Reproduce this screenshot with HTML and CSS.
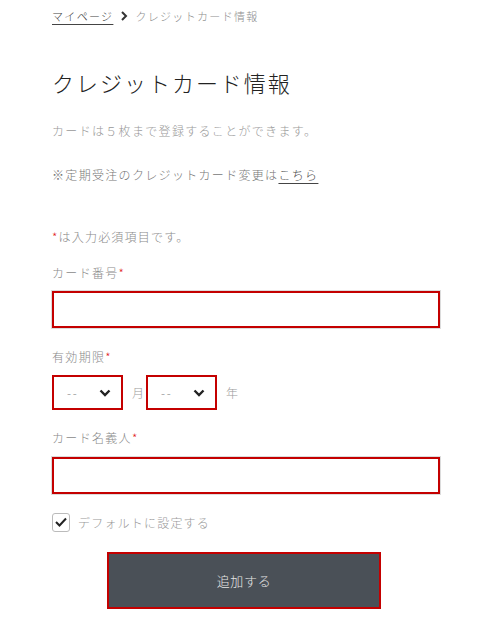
FILE: index.html
```html
<!DOCTYPE html>
<html lang="ja">
<head>
  <meta charset="UTF-8" />
  <meta name="viewport" content="width=device-width, initial-scale=1.0"/>
  <title>クレジットカード情報</title>
  <link rel="stylesheet" href="styles.css">
</head>
<body>
  <div class="page">
    <nav class="breadcrumb">
      <a href="#" class="crumb-link">マイページ</a>
      <svg class="crumb-sep" width="8" height="10" viewBox="0 0 8 10"><path d="M2 1l4 4-4 4" fill="none" stroke="#333" stroke-width="2"/></svg>
      <span class="crumb-current">クレジットカード情報</span>
    </nav>

    <h1 class="title">クレジットカード情報</h1>

    <p class="note">カードは５枚まで登録することができます。</p>
    <p class="note dark">※定期受注のクレジットカード変更は<a href="#" class="here">こちら</a></p>

    <form class="card-form">
      <p class="required-note"><span class="req">*</span>は入力必須項目です。</p>

      <label class="label" for="cardNo">カード番号<span class="req">*</span></label>
      <input type="text" id="cardNo" class="field">

      <label class="label label-exp">有効期限<span class="req">*</span></label>
      <div class="expiry">
        <div class="select-wrap">
          <select class="select">
            <option>--</option>
          </select>
          <svg class="chev" width="12" height="8" viewBox="0 0 12 8"><path d="M1.5 1.5l4.5 4.5 4.5-4.5" fill="none" stroke="#222" stroke-width="2.4"/></svg>
        </div>
        <span class="unit">月</span>
        <div class="select-wrap">
          <select class="select">
            <option>--</option>
          </select>
          <svg class="chev" width="12" height="8" viewBox="0 0 12 8"><path d="M1.5 1.5l4.5 4.5 4.5-4.5" fill="none" stroke="#222" stroke-width="2.4"/></svg>
        </div>
        <span class="unit">年</span>
      </div>

      <label class="label label-name" for="cardName">カード名義人<span class="req">*</span></label>
      <input type="text" id="cardName" class="field field-name">

      <label class="check-row">
        <span class="checkbox">
          <svg width="12" height="10" viewBox="0 0 12 10"><path d="M1 5l3.5 3.5L11 1.5" fill="none" stroke="#222" stroke-width="2"/></svg>
        </span>
        デフォルトに設定する
      </label>

      <button type="submit" class="submit">追加する</button>
    </form>
  </div>
</body>
</html>
```

FILE: styles.css
```css
body {
  margin: 0;
  background: #ffffff;
  color: #222;
  font-family: "Noto Sans CJK JP", "Noto Sans", sans-serif;
  font-weight: 300;
}
.page {
  width: 388px;
  padding: 6px 0 0 52px;
}
.breadcrumb {
  display: flex;
  align-items: center;
  height: 20px;
  font-size: 11px;
  letter-spacing: 0.12em;
}
.crumb-link {
  color: #444;
  text-decoration: underline;
  text-underline-offset: 3px;
}
.crumb-sep {
  margin: 0 7px 0 7px;
}
.crumb-current {
  color: #8e8e8e;
}
.title {
  margin: 40px 0 0;
  font-size: 22px;
  font-weight: 300;
  line-height: 32px;
  letter-spacing: 0.09em;
  color: #222;
}
.note {
  margin: 23px 0 0;
  font-size: 12px;
  line-height: 20px;
  letter-spacing: 0.11em;
  color: #999;
}
.note.dark {
  margin-top: 24px;
  color: #777;
}
.here {
  color: #444;
  text-decoration: underline;
  text-underline-offset: 3px;
}
.card-form {
  display: flex;
  flex-direction: column;
  align-items: flex-start;
}
.required-note {
  margin: 42px 0 0;
  font-size: 12px;
  line-height: 20px;
  letter-spacing: 0.1em;
  color: #8a8a8a;
}
.req {
  color: #e02020;
}
.label {
  margin-top: 16px;
  font-size: 12px;
  line-height: 20px;
  letter-spacing: 0.11em;
  color: #8a8a8a;
}
.label-exp {
  margin-top: 19px;
}
.label-name {
  margin-top: 18px;
}
.field {
  box-sizing: border-box;
  width: 388px;
  height: 37px;
  margin: 8px 0 0;
  border: 2px solid #c40000;
  box-shadow: 0 0 0 1px #dcdcdc;
  background: #fff;
  padding: 0 10px;
  font-size: 14px;
  outline: none;
}
.field-name {
  margin-top: 9px;
}
.expiry {
  display: flex;
  align-items: center;
  margin-top: 8px;
}
.select-wrap {
  position: relative;
}
.select {
  box-sizing: border-box;
  width: 71px;
  height: 35px;
  appearance: none;
  -webkit-appearance: none;
  border: 2px solid #c40000;
  border-radius: 0;
  background: #fff;
  padding: 0 0 0 13px;
  font-family: inherit;
  font-weight: 300;
  font-size: 12px;
  letter-spacing: 0.15em;
  color: #888;
  outline: none;
}
.chev {
  position: absolute;
  right: 12px;
  top: 14px;
  pointer-events: none;
}
.unit {
  margin: 0 2px 0 9px;
  font-size: 12px;
  color: #999;
}
.check-row {
  display: flex;
  align-items: center;
  gap: 8px;
  margin-top: 18px;
  height: 20px;
  font-size: 12px;
  letter-spacing: 0.1em;
  color: #999;
}
.checkbox {
  box-sizing: border-box;
  width: 18px;
  height: 19px;
  border: 1px solid #bbb;
  border-radius: 3px;
  display: flex;
  align-items: center;
  justify-content: center;
}
.submit {
  box-sizing: border-box;
  width: 274px;
  height: 57px;
  margin: 20px 0 0 55px;
  background: #4a5057;
  border: 2px solid #c40000;
  color: #e6e6e6;
  font-family: inherit;
  font-weight: 300;
  font-size: 13px;
  letter-spacing: 0.05em;
  cursor: pointer;
}
```
